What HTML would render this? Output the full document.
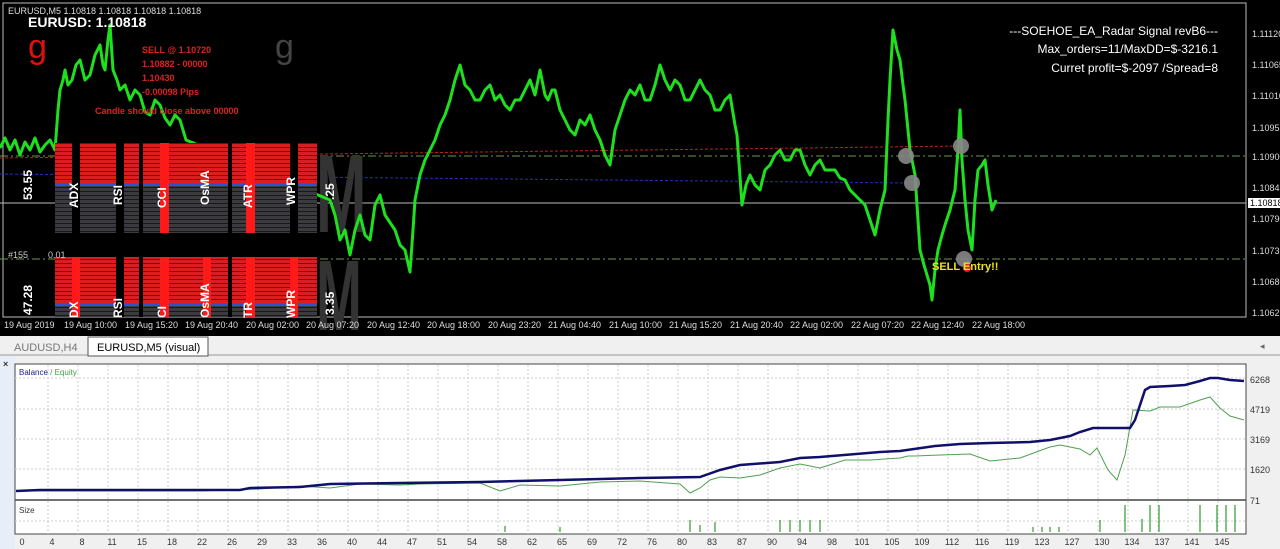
<!DOCTYPE html>
<html><head><meta charset="utf-8"><style>
body{margin:0;width:1280px;height:549px;overflow:hidden;background:#f0f0f0;font-family:"Liberation Sans",sans-serif}
svg{display:block}
</style></head><body>
<svg width="1280" height="549" xmlns="http://www.w3.org/2000/svg" font-family="Liberation Sans, sans-serif">
<defs>
<pattern id="rs" width="4" height="4" patternUnits="userSpaceOnUse"><rect width="4" height="4" fill="#d81e1e"/><rect y="3" width="4" height="1" fill="#6a1010"/></pattern>
<pattern id="gs" width="4" height="4" patternUnits="userSpaceOnUse"><rect width="4" height="4" fill="#3a3a3f"/><rect y="3" width="4" height="1" fill="#18181a"/></pattern>
</defs>
<rect x="0" y="0" width="1280" height="336" fill="#000"/>
<rect x="3" y="3" width="1243" height="314" fill="none" stroke="#bbb" stroke-width="1"/>
<line x1="0" y1="158" x2="960" y2="146" stroke="#c02020" stroke-dasharray="3,2"/>
<line x1="0" y1="174" x2="910" y2="183" stroke="#2030c0" stroke-dasharray="3,2"/>
<line x1="0" y1="156" x2="1246" y2="156" stroke="#6a9a40" stroke-dasharray="8,3,2,3"/>
<line x1="0" y1="259" x2="1246" y2="259" stroke="#6a9a40" stroke-dasharray="8,3,2,3"/>
<line x1="0" y1="203" x2="1246" y2="203" stroke="#bbb"/>
<text transform="translate(316,232) scale(0.55,1)" font-size="110" fill="#333" font-weight="bold">M</text>
<text transform="translate(316,330) scale(0.55,1)" font-size="100" fill="#333" font-weight="bold">M</text>
<text x="28" y="58" font-size="34" fill="#e01010">g</text>
<text x="275" y="58" font-size="34" fill="#444">g</text>
<polyline fill="none" stroke="#1ee01e" stroke-width="3" stroke-linejoin="round" points="0,148 5,138 10,150 15,140 20,155 25,142 30,150 35,138 40,152 45,145 50,140 55,150 58,110 60,90 63,80 65,70 68,85 72,80 76,65 80,60 85,80 90,75 95,55 100,45 103,65 105,70 108,40 110,25 113,70 117,80 120,90 125,85 130,100 135,90 140,95 145,112 150,115 155,100 160,105 165,118 170,125 175,115 180,120 186,140 330,200 335,215 340,240 345,230 350,255 355,230 360,215 365,235 370,240 375,205 380,195 385,215 395,230 400,245 405,250 410,272 413,230 415,200 420,175 425,160 430,150 435,140 440,125 445,115 450,100 455,80 460,65 465,85 470,90 475,100 480,100 485,90 490,85 495,100 500,95 505,105 510,110 515,100 520,100 525,90 530,80 535,95 540,70 545,95 548,100 552,90 555,90 560,110 565,120 570,130 575,135 580,120 585,125 590,115 595,130 600,140 605,155 610,165 615,130 620,115 625,100 630,90 635,95 640,85 645,100 650,100 655,85 660,65 665,80 670,90 675,80 680,85 685,100 690,100 695,90 700,80 705,90 710,95 715,110 720,110 725,100 730,95 735,125 737,135 742,205 746,185 750,175 755,185 760,190 765,170 770,165 775,155 780,150 785,160 790,160 795,150 800,150 805,165 810,175 815,165 820,160 825,170 835,170 840,178 845,180 850,190 855,195 860,200 865,205 870,220 875,235 880,210 885,190 888,120 890,80 893,30 897,50 900,60 903,85 905,100 908,130 910,150 913,165 915,175 918,220 920,250 924,265 927,275 930,285 932,300 935,270 938,250 942,235 945,225 950,210 955,190 958,150 960,110 962,160 965,200 968,230 972,250 975,200 978,170 982,165 985,160 988,185 992,210 996,200"/>
<g>
<rect x="55" y="143" width="262" height="90" fill="url(#rs)"/>
<rect x="55" y="185" width="262" height="48" fill="url(#gs)"/>
<rect x="55" y="183" width="262" height="3" fill="#3050d0"/>
<rect x="72" y="143" width="8" height="90" fill="#000"/>
<rect x="116" y="143" width="8" height="90" fill="#000"/>
<rect x="139" y="143" width="4" height="90" fill="#000"/>
<rect x="228" y="143" width="4" height="90" fill="#000"/>
<rect x="290" y="143" width="8" height="90" fill="#000"/>
<rect x="160" y="143" width="9" height="90" fill="#ff1a1a"/>
<rect x="246" y="143" width="9" height="90" fill="#ff1a1a"/>
<rect x="55" y="257" width="262" height="60" fill="url(#rs)"/>
<rect x="55" y="305" width="262" height="12" fill="url(#gs)"/>
<rect x="55" y="303" width="262" height="3" fill="#3050d0"/>
<rect x="116" y="257" width="8" height="60" fill="#000"/>
<rect x="139" y="257" width="4" height="60" fill="#000"/>
<rect x="228" y="257" width="4" height="60" fill="#000"/>
<rect x="72" y="257" width="8" height="60" fill="#ff1a1a"/>
<rect x="160" y="257" width="9" height="60" fill="#ff1a1a"/>
<rect x="203" y="257" width="8" height="60" fill="#ff1a1a"/>
<rect x="246" y="257" width="9" height="60" fill="#ff1a1a"/>
<rect x="290" y="257" width="8" height="60" fill="#ff1a1a"/>
<g fill="#fff" font-size="12" font-weight="bold">
<text transform="translate(78,208) rotate(-90)">ADX</text>
<text transform="translate(122,205) rotate(-90)">RSI</text>
<text transform="translate(166,208) rotate(-90)">CCI</text>
<text transform="translate(209,205) rotate(-90)">OsMA</text>
<text transform="translate(252,208) rotate(-90)">ATR</text>
<text transform="translate(295,205) rotate(-90)">WPR</text>
<text transform="translate(32,200) rotate(-90)">53.55</text>
<text transform="translate(334,200) rotate(-90)">.25</text>
<text transform="translate(32,315) rotate(-90)">47.28</text>
<text transform="translate(334,315) rotate(-90)">3.35</text>
<text transform="translate(78,318) rotate(-90)">DX</text>
<text transform="translate(122,318) rotate(-90)">RSI</text>
<text transform="translate(166,318) rotate(-90)">CI</text>
<text transform="translate(209,318) rotate(-90)">OsMA</text>
<text transform="translate(252,318) rotate(-90)">TR</text>
<text transform="translate(295,318) rotate(-90)">WPR</text>
</g>
<text x="8" y="258" font-size="9" fill="#ccc">#155</text>
<text x="48" y="258" font-size="9" fill="#ccc">0.01</text>
</g>
<g fill="#888" opacity="0.9"><circle cx="906" cy="156" r="8"/><circle cx="912" cy="183" r="8"/><circle cx="961" cy="146" r="8"/><circle cx="964" cy="259" r="8"/></g>
<circle cx="967" cy="268" r="4" fill="#e02020"/>
<text x="932" y="270" font-size="11" font-weight="bold" fill="#f0e020">SELL Entry!!</text>
<text x="8" y="14" font-size="9" fill="#ddd">EURUSD,M5  1.10818 1.10818 1.10818 1.10818</text>
<text x="28" y="27" font-size="14" font-weight="bold" fill="#fff">EURUSD: 1.10818</text>
<g font-size="9" font-weight="bold" fill="#e02020">
<text x="142" y="53">SELL @ 1.10720</text>
<text x="142" y="67">1.10882 - 00000</text>
<text x="142" y="81">1.10430</text>
<text x="142" y="95">-0.00098 Pips</text>
<text x="95" y="114">Candle should close above 00000</text>
</g>
<g font-size="12" fill="#fff" text-anchor="end">
<text x="1218" y="35">---SOEHOE_EA_Radar Signal revB6---</text>
<text x="1218" y="53">Max_orders=11/MaxDD=$-3216.1</text>
<text x="1218" y="72">Curret profit=$-2097 /Spread=8</text>
</g>
<g font-size="9" fill="#ddd">
<text x="1252" y="37">1.11120</text><text x="1252" y="68">1.11065</text><text x="1252" y="99">1.11010</text><text x="1252" y="131">1.10955</text><text x="1252" y="160">1.10900</text><text x="1252" y="191">1.10845</text><text x="1252" y="222">1.10790</text><text x="1252" y="254">1.10735</text><text x="1252" y="285">1.10680</text><text x="1252" y="316">1.10625</text>
</g>
<rect x="1248" y="198" width="32" height="10" fill="#fff"/><text x="1250" y="206" font-size="9" fill="#000">1.10818</text>
<g font-size="9" fill="#ddd">
<text x="4" y="328">19 Aug 2019</text><text x="64" y="328">19 Aug 10:00</text><text x="125" y="328">19 Aug 15:20</text><text x="185" y="328">19 Aug 20:40</text><text x="246" y="328">20 Aug 02:00</text><text x="306" y="328">20 Aug 07:20</text><text x="367" y="328">20 Aug 12:40</text><text x="427" y="328">20 Aug 18:00</text><text x="488" y="328">20 Aug 23:20</text><text x="548" y="328">21 Aug 04:40</text><text x="609" y="328">21 Aug 10:00</text><text x="669" y="328">21 Aug 15:20</text><text x="730" y="328">21 Aug 20:40</text><text x="790" y="328">22 Aug 02:00</text><text x="851" y="328">22 Aug 07:20</text><text x="911" y="328">22 Aug 12:40</text><text x="972" y="328">22 Aug 18:00</text>
</g>
<rect x="0" y="336" width="1280" height="20" fill="#f0f0f0"/>
<line x1="0" y1="355" x2="1280" y2="355" stroke="#999"/>
<text x="14" y="351" font-size="11" fill="#777">AUDUSD,H4</text>
<rect x="88" y="337" width="120" height="19" fill="#fff" stroke="#555"/>
<text x="97" y="351" font-size="11" fill="#000">EURUSD,M5 (visual)</text>
<text x="1260" y="349" font-size="9" fill="#666">◂</text>
<rect x="0" y="356" width="15" height="193" fill="#e8eef8"/>
<text x="3" y="367" font-size="9" font-weight="bold" fill="#333">×</text>
<rect x="15" y="364" width="1231" height="170" fill="#fff" stroke="#444"/>
<line x1="15" y1="500" x2="1246" y2="500" stroke="#444" stroke-width="1.5"/>
<g stroke="#ccc" stroke-dasharray="2,2">
<line x1="15" y1="378" x2="1246" y2="378"/><line x1="15" y1="409" x2="1246" y2="409"/><line x1="15" y1="439" x2="1246" y2="439"/><line x1="15" y1="469" x2="1246" y2="469"/>
<line x1="15" y1="521" x2="1246" y2="521"/>
</g>
<g stroke="#ccc" stroke-dasharray="2,2">
<line x1="48" y1="365" x2="48" y2="534"/><line x1="78" y1="365" x2="78" y2="534"/><line x1="108" y1="365" x2="108" y2="534"/><line x1="138" y1="365" x2="138" y2="534"/><line x1="168" y1="365" x2="168" y2="534"/><line x1="198" y1="365" x2="198" y2="534"/><line x1="228" y1="365" x2="228" y2="534"/><line x1="258" y1="365" x2="258" y2="534"/><line x1="288" y1="365" x2="288" y2="534"/><line x1="318" y1="365" x2="318" y2="534"/><line x1="348" y1="365" x2="348" y2="534"/><line x1="378" y1="365" x2="378" y2="534"/><line x1="408" y1="365" x2="408" y2="534"/><line x1="438" y1="365" x2="438" y2="534"/><line x1="468" y1="365" x2="468" y2="534"/><line x1="498" y1="365" x2="498" y2="534"/><line x1="528" y1="365" x2="528" y2="534"/><line x1="558" y1="365" x2="558" y2="534"/><line x1="588" y1="365" x2="588" y2="534"/><line x1="618" y1="365" x2="618" y2="534"/><line x1="648" y1="365" x2="648" y2="534"/><line x1="678" y1="365" x2="678" y2="534"/><line x1="708" y1="365" x2="708" y2="534"/><line x1="738" y1="365" x2="738" y2="534"/><line x1="768" y1="365" x2="768" y2="534"/><line x1="798" y1="365" x2="798" y2="534"/><line x1="828" y1="365" x2="828" y2="534"/><line x1="858" y1="365" x2="858" y2="534"/><line x1="888" y1="365" x2="888" y2="534"/><line x1="918" y1="365" x2="918" y2="534"/><line x1="948" y1="365" x2="948" y2="534"/><line x1="978" y1="365" x2="978" y2="534"/><line x1="1008" y1="365" x2="1008" y2="534"/><line x1="1038" y1="365" x2="1038" y2="534"/><line x1="1068" y1="365" x2="1068" y2="534"/><line x1="1098" y1="365" x2="1098" y2="534"/><line x1="1128" y1="365" x2="1128" y2="534"/><line x1="1158" y1="365" x2="1158" y2="534"/><line x1="1188" y1="365" x2="1188" y2="534"/><line x1="1218" y1="365" x2="1218" y2="534"/>
</g>
<text x="19" y="375" font-size="8" fill="#1a1a8a">Balance <tspan fill="#40a040">/ Equity</tspan></text>
<text x="19" y="513" font-size="8" fill="#333">Size</text>
<polyline fill="none" stroke="#50a050" stroke-width="1" points="16,491 200,491 260,489 300,486 330,488 360,484 400,485 420,484 480,483 500,491 520,485 560,486 600,482 640,481 680,484 690,493 700,488 710,480 720,477 740,478 760,475 780,468 800,464 820,468 845,460 870,460 900,458 908,456 915,456 940,455 970,454 990,461 1020,458 1050,447 1060,445 1080,449 1090,455 1097,448 1108,470 1117,480 1125,455 1133,410 1150,411 1160,407 1180,407 1200,400 1210,397 1220,408 1230,416 1244,420"/>
<polyline fill="none" stroke="#10106a" stroke-width="2.5" points="16,491 40,490 240,490 250,488 300,487 330,484 400,483 480,482 560,480 600,479 640,478 700,477 720,470 740,465 780,462 800,458 820,457 880,452 900,451 935,446 960,444 990,443 1030,442 1050,440 1070,436 1080,432 1093,428 1130,428 1135,420 1145,390 1150,387 1170,386 1185,385 1200,381 1210,378 1218,378 1230,380 1244,381"/>
<g stroke="#40a040" stroke-width="1.3">
<line x1="1033" y1="532" x2="1033" y2="527"/><line x1="1042" y1="532" x2="1042" y2="527"/><line x1="1050" y1="532" x2="1050" y2="527"/><line x1="1059" y1="532" x2="1059" y2="527"/><line x1="1100" y1="532" x2="1100" y2="520"/><line x1="1125" y1="532" x2="1125" y2="505"/><line x1="1142" y1="532" x2="1142" y2="519"/><line x1="1150" y1="532" x2="1150" y2="505"/><line x1="1159" y1="532" x2="1159" y2="505"/><line x1="1200" y1="532" x2="1200" y2="505"/><line x1="1217" y1="532" x2="1217" y2="505"/><line x1="1226" y1="532" x2="1226" y2="505"/><line x1="1235" y1="532" x2="1235" y2="505"/>
<line x1="690" y1="532" x2="690" y2="520"/><line x1="700" y1="532" x2="700" y2="525"/><line x1="715" y1="532" x2="715" y2="522"/><line x1="780" y1="532" x2="780" y2="520"/><line x1="790" y1="532" x2="790" y2="520"/><line x1="800" y1="532" x2="800" y2="520"/><line x1="810" y1="532" x2="810" y2="520"/><line x1="820" y1="532" x2="820" y2="520"/><line x1="505" y1="532" x2="505" y2="526"/><line x1="560" y1="532" x2="560" y2="527"/>
</g>
<g font-size="9" fill="#333">
<text x="1250" y="383">6268</text><text x="1250" y="413">4719</text><text x="1250" y="443">3169</text><text x="1250" y="473">1620</text><text x="1250" y="504">71</text>
</g>
<g font-size="9" fill="#333" text-anchor="middle">
<text x="22" y="545">0</text><text x="52" y="545">4</text><text x="82" y="545">8</text><text x="112" y="545">11</text><text x="142" y="545">15</text><text x="172" y="545">18</text><text x="202" y="545">22</text><text x="232" y="545">26</text><text x="262" y="545">29</text><text x="292" y="545">33</text><text x="322" y="545">36</text><text x="352" y="545">40</text><text x="382" y="545">44</text><text x="412" y="545">47</text><text x="442" y="545">51</text><text x="472" y="545">54</text><text x="502" y="545">58</text><text x="532" y="545">62</text><text x="562" y="545">65</text><text x="592" y="545">69</text><text x="622" y="545">72</text><text x="652" y="545">76</text><text x="682" y="545">80</text><text x="712" y="545">83</text><text x="742" y="545">87</text><text x="772" y="545">90</text><text x="802" y="545">94</text><text x="832" y="545">98</text><text x="862" y="545">101</text><text x="892" y="545">105</text><text x="922" y="545">109</text><text x="952" y="545">112</text><text x="982" y="545">116</text><text x="1012" y="545">119</text><text x="1042" y="545">123</text><text x="1072" y="545">127</text><text x="1102" y="545">130</text><text x="1132" y="545">134</text><text x="1162" y="545">137</text><text x="1192" y="545">141</text><text x="1222" y="545">145</text>
</g>
</svg>
</body></html>
